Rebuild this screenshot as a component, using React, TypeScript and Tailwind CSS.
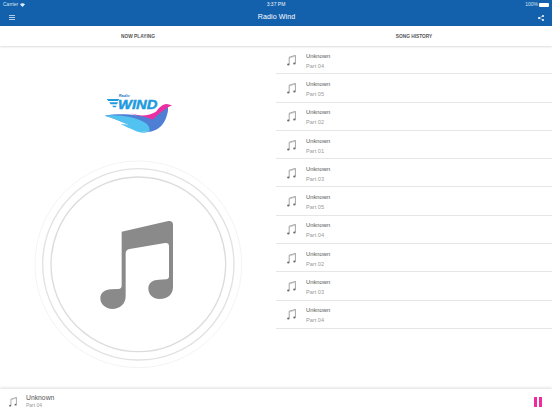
const font = { fontFamily: '"Liberation Sans", Arial, sans-serif' }

const songs = ["04", "05", "02", "01", "03", "05", "04", "02", "03", "04"]

function NoteIcon({ className }: { className: string }) {
  return (
    <svg viewBox="0 0 9 11" className={className}>
      <path d="M2.2 2.2 L8.4 0.4 V8.2 M2.2 2.2 V9.4" fill="none" stroke="#808080" strokeWidth="0.7" />
      <path d="M2.2 3 L8.4 1.3" fill="none" stroke="#aaa" strokeWidth="0.5" />
      <ellipse cx="1.3" cy="9.6" rx="1.2" ry="1" fill="#6a6a6a" />
      <ellipse cx="7.4" cy="8.5" rx="1.2" ry="1" fill="#6a6a6a" />
    </svg>
  )
}

function Logo() {
  return (
    <svg viewBox="0 0 300 180" className="h-[60px] w-[100px]">
      <path d="M50 42 H88 L84 48 H55 Z M58 52 H84 L81 58 H62 Z M66 62 H80 L77 67 H70 Z" fill="#1e9be0" />
      <text x="86" y="35" fontSize="12" fontStyle="italic" fontWeight="700" fill="#1e78c8" style={font}>Radio</text>
      <text x="84" y="73" fontSize="39" fontStyle="italic" fontWeight="700" fill="#1e9be0" stroke="#1e9be0" strokeWidth="1.5" textLength="118" lengthAdjust="spacingAndGlyphs" style={font}>WIND</text>
      <path d="M120 84 C150 96 178 92 198 80 C208 68 216 58 230 57 L246 61 L234 67 C234 92 218 116 196 132 C176 108 150 96 120 84 Z" fill="#ec2fa0" />
      <path d="M44 92 C90 84 150 88 188 104 C200 92 214 80 234 67 C234 100 216 136 180 140 C166 141 154 138 144 132 C116 118 78 102 44 92 Z" fill="#4f7fd4" />
      <path d="M44 92 C90 88 140 96 170 116 C178 124 180 132 178 140 C166 141 154 138 144 132 C116 118 78 102 44 92 Z" fill="#52c3f1" />
      <path d="M92 118 C112 116 136 124 152 134 C158 139 164 141 172 141 C152 150 130 134 92 118 Z" fill="#52c3f1" />
    </svg>
  )
}

function Disc() {
  return (
    <svg viewBox="0 0 675 660" className="h-[220px] w-[225px]">
      <circle cx="340" cy="328" r="310" fill="none" stroke="#f0f0f0" strokeWidth="2.5" />
      <circle cx="340" cy="328" r="287" fill="none" stroke="#e2e2e2" strokeWidth="4" />
      <circle cx="340" cy="328" r="262" fill="none" stroke="#dcdcdc" strokeWidth="4" />
      <path
        d="M290 230 L430 198 Q444 196 444 210 V396 C444 420 426 432 404 432 C384 432 370 420 370 400 C370 384 384 374 402 374 L424 373 Q432 372 432 364 V274 Q432 262 420 264 L314 282 Q302 284 302 296 V424 C302 448 284 462 262 462 C242 462 226 448 226 430 C226 414 240 403 258 403 L280 402 Q290 401 290 392 Z"
        fill="#8a8a8a"
      />
    </svg>
  )
}

export default function App() {
  return (
    <div className="flex h-[414px] w-[552px] flex-col overflow-hidden bg-white" style={font}>
      <header className="h-[26px] shrink-0 bg-[#1361ad] text-white">
        <div className="flex h-[9px] items-center justify-between px-[3px] pt-[1px] text-[5px] text-[#d5e3f2]">
          <div className="flex flex-1 items-center gap-[2px]">
            <span>Carrier</span>
            <svg viewBox="0 0 10 8" className="h-[4px] w-[5px]">
              <path d="M0 2.6 C3 0 7 0 10 2.6 L5 8 Z" fill="#e3edf7" />
            </svg>
          </div>
          <span className="text-[#eef4fa]">3:37 PM</span>
          <div className="flex flex-1 items-center justify-end gap-[1px]">
            <span>100%</span>
            <span className="h-[4px] w-[10px] rounded-[1px] bg-white" />
          </div>
        </div>
        <div className="flex h-[17px] items-center justify-between pl-[9px] pr-[8px]">
          <svg viewBox="0 0 6 5" className="h-[5px] w-[6px]">
            <path d="M0 .5 H6 M0 2.5 H6 M0 4.5 H6" stroke="#dbe7f3" strokeWidth="0.8" />
          </svg>
          <span className="text-[7.1px] tracking-[0.1px]">Radio Wind</span>
          <svg viewBox="0 0 6 6" className="h-[6px] w-[6px]">
            <path d="M5 1 L1 3 L5 5" fill="none" stroke="white" strokeWidth="0.5" />
            <circle cx="5" cy="1" r="1" fill="white" />
            <circle cx="1" cy="3" r="1" fill="white" />
            <circle cx="5" cy="5" r="1" fill="white" />
          </svg>
        </div>
      </header>

      <nav className="z-10 flex h-[20px] shrink-0 bg-white pt-[1px] text-[4.8px] font-bold text-[#555] shadow-[0_1px_2px_rgba(0,0,0,0.14)]">
        <div className="flex w-[276px] items-center justify-center">NOW PLAYING</div>
        <div className="flex w-[276px] items-center justify-center">SONG HISTORY</div>
      </nav>

      <main className="flex min-h-0 flex-1">
        <section className="flex w-[276px] flex-col pl-[25px]">
          <div className="mb-[10px] ml-[65px] mt-[39px] h-[60px]">
            <Logo />
          </div>
          <Disc />
        </section>
        <section className="w-[276px]">
          {songs.map((part, i) => (
            <div
              key={i}
              className="flex h-[28.3px] items-center gap-[10px] border-b border-[#e6e6e6] pl-[11px] pt-[1px]"
            >
              <NoteIcon className="h-[11px] w-[9px] shrink-0" />
              <div className="flex flex-col gap-[4px] pt-[1px] leading-[6px]">
                <span className="text-[5.8px] text-[#555]">Unknown</span>
                <span className="text-[5.6px] text-[#999]">Part {part}</span>
              </div>
            </div>
          ))}
        </section>
      </main>

      <footer className="z-10 flex h-[25px] shrink-0 items-center justify-between bg-white pl-[9px] pr-[10px] shadow-[0_-1px_3px_rgba(0,0,0,0.14)]">
        <div className="flex items-center gap-[9px]">
          <NoteIcon className="h-[10px] w-[8px] shrink-0" />
          <div className="flex flex-col gap-[1px] leading-[6px]">
            <span className="text-[6.8px] text-[#555]">Unknown</span>
            <span className="text-[5px] text-[#999]">Part 04</span>
          </div>
        </div>
        <div className="flex gap-[2px]">
          <span className="h-[10px] w-[3px] bg-[#ee2c9e]" />
          <span className="h-[10px] w-[3px] bg-[#ee2c9e]" />
        </div>
      </footer>
    </div>
  )
}
